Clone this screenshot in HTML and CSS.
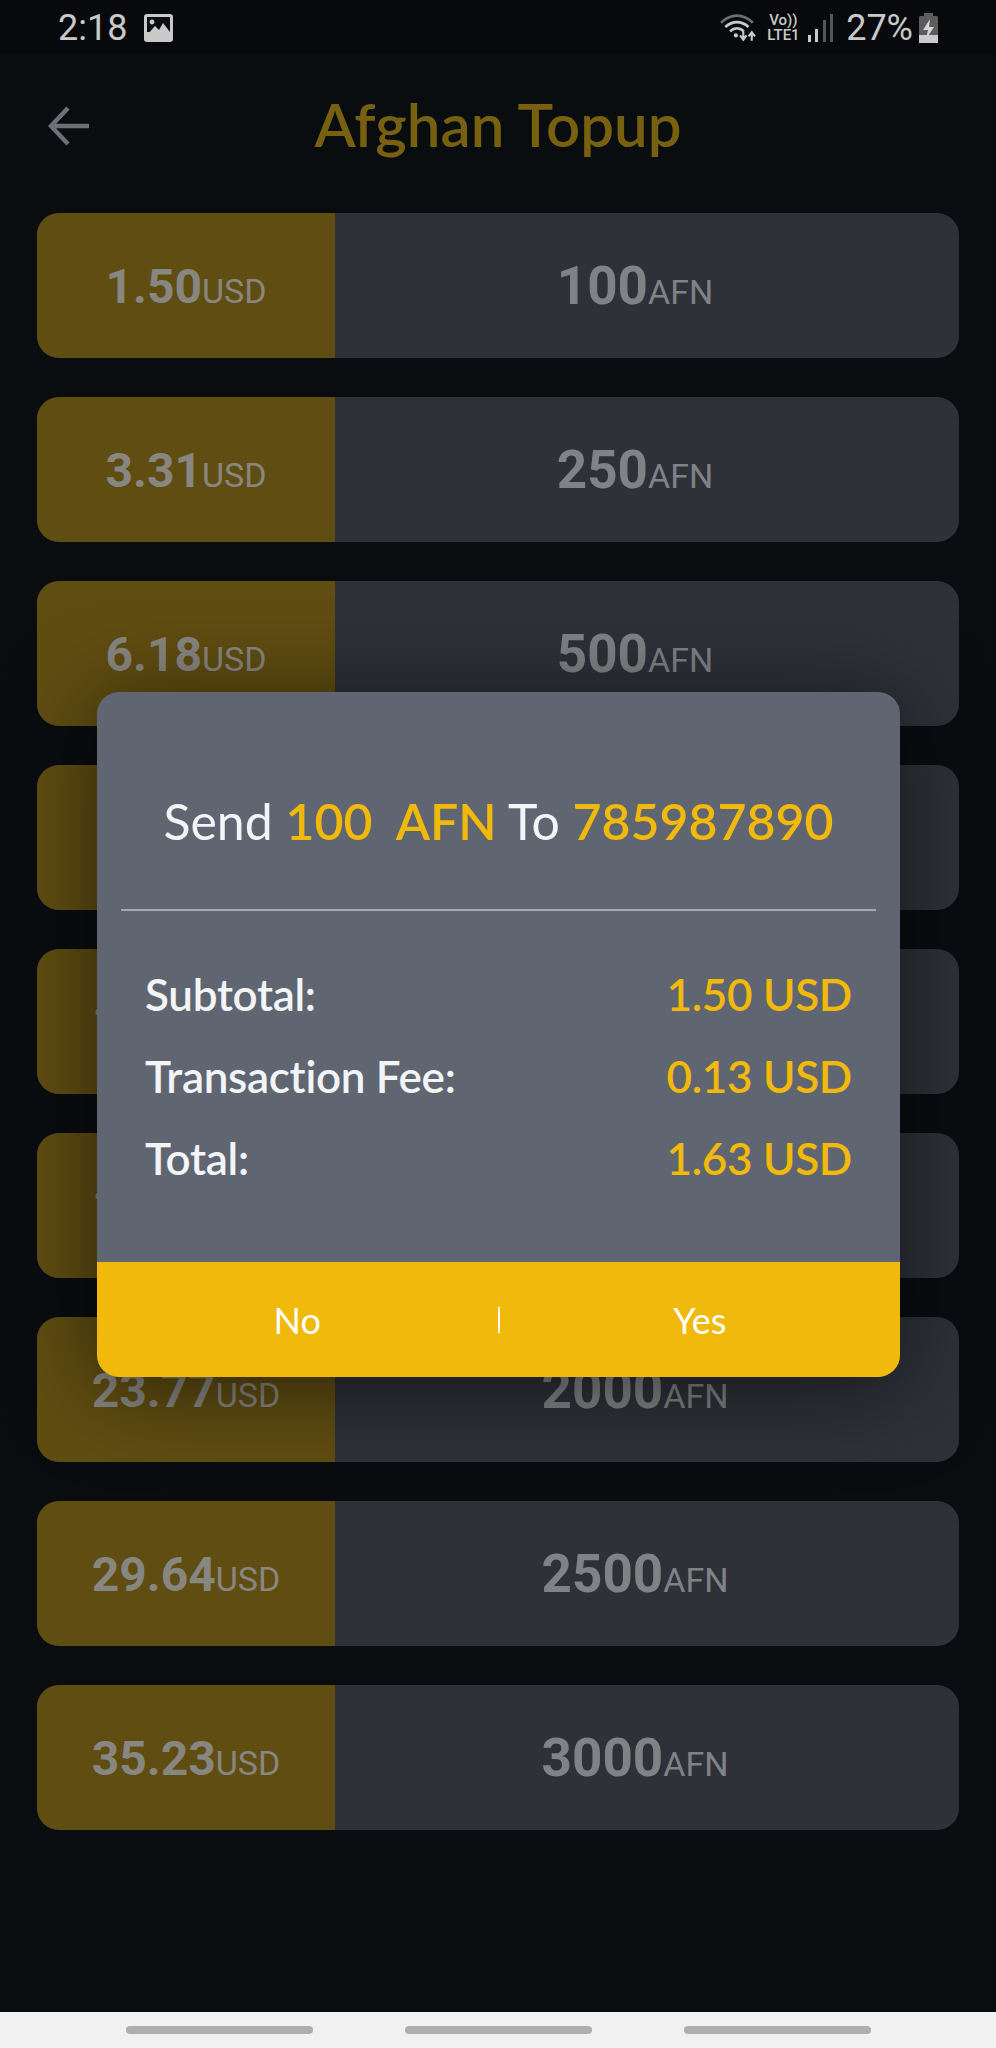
FILE: index.html
```html
<!DOCTYPE html>
<html lang="en">
<head>
    <meta charset="UTF-8">
    <meta name="viewport" content="width=device-width, initial-scale=1.0">
    <title>Afghan Topup</title>
    <link rel="stylesheet" href="styles.css">
</head>
<body>
    <div class="screen">
        <!-- status bar -->
        <div class="status-bar">
            <div class="status-left">
                <span class="clock">2:18</span>
                <svg class="pic-icon" width="29" height="28" viewBox="0 0 29 28">
                    <rect x="0" y="0" width="29" height="28" rx="3" fill="#c9c9c9"/>
                    <rect x="3" y="3" width="23" height="15" fill="#0a0c0f"/>
                    <circle cx="8" cy="8" r="2.4" fill="#c9c9c9"/>
                    <path d="M3 21 L11 12 L15 16 L19 9 L26 18 L26 25 L3 25 Z" fill="#c9c9c9"/>
                </svg>
            </div>
            <div class="status-right">
                <svg class="wifi-icon" width="36" height="30" viewBox="0 0 34 28" fill="none">
                    <path d="M1 9 C10 0 22 0 31 9" stroke="#6d6d6d" stroke-width="2.6"/>
                    <path d="M5 13 C12 7 20 7 27 13" stroke="#c9c9c9" stroke-width="2.6"/>
                    <path d="M9.5 17 C13.5 13.5 18.5 13.5 22.500 17" stroke="#c9c9c9" stroke-width="2.6"/>
                    <circle cx="15" cy="21" r="2" fill="#c9c9c9"/>
                    <path d="M22 17 V24 M19 21 L22 25 L25 21" stroke="#c9c9c9" stroke-width="2"/>
                    <path d="M30 26 V19 M27 22 L30 18 L33 22" stroke="#c9c9c9" stroke-width="2"/>
                </svg>
                <div class="volte"><span>Vo))</span><span>LTE1</span></div>
                <div class="signal">
                    <i class="bar bar-1"></i>
                    <i class="bar bar-2"></i>
                    <i class="bar bar-3"></i>
                    <i class="bar bar-4"></i>
                </div>
                <span class="battery-text">27%</span>
                <svg class="battery-icon" width="19" height="30" viewBox="0 0 19 30">
                    <rect x="5" y="0" width="9" height="3" fill="#5c5c5c"/>
                    <rect x="0" y="3" width="19" height="27" rx="1.500" fill="#5c5c5c"/>
                    <rect x="0" y="22" width="19" height="8" fill="#c9c9c9"/>
                    <path d="M11 6 L4 17 H9 L7 26 L15 14 H10 Z" fill="#d6d6d6"/>
                </svg>
            </div>
        </div>

        <!-- header -->
        <div class="top-bar">
            <svg class="back-icon" width="42" height="40" viewBox="0 0 42 40" fill="none">
                <path d="M41 20 H3 M20 2 L3 20 L20 38" stroke="#6d7074" stroke-width="4.500"/>
            </svg>
            <h1 class="page-title">Afghan Topup</h1>
            <span></span>
        </div>

        <!-- price list -->
        <div class="price-list">
            <div class="price-card">
                <div class="price-usd"><b>1.50</b><span>USD</span></div>
                <div class="price-afn"><b>100</b><span>AFN</span></div>
            </div>
            <div class="price-card">
                <div class="price-usd"><b>3.31</b><span>USD</span></div>
                <div class="price-afn"><b>250</b><span>AFN</span></div>
            </div>
            <div class="price-card">
                <div class="price-usd"><b>6.18</b><span>USD</span></div>
                <div class="price-afn"><b>500</b><span>AFN</span></div>
            </div>
            <div class="price-card">
                <div class="price-usd"><b>8.95</b><span>USD</span></div>
                <div class="price-afn"><b>750</b><span>AFN</span></div>
            </div>
            <div class="price-card">
                <div class="price-usd"><b>11.92</b><span>USD</span></div>
                <div class="price-afn"><b>1000</b><span>AFN</span></div>
            </div>
            <div class="price-card">
                <div class="price-usd"><b>17.85</b><span>USD</span></div>
                <div class="price-afn"><b>1500</b><span>AFN</span></div>
            </div>
            <div class="price-card">
                <div class="price-usd"><b>23.77</b><span>USD</span></div>
                <div class="price-afn"><b>2000</b><span>AFN</span></div>
            </div>
            <div class="price-card">
                <div class="price-usd"><b>29.64</b><span>USD</span></div>
                <div class="price-afn"><b>2500</b><span>AFN</span></div>
            </div>
            <div class="price-card">
                <div class="price-usd"><b>35.23</b><span>USD</span></div>
                <div class="price-afn"><b>3000</b><span>AFN</span></div>
            </div>
        </div>

        <!-- confirm dialog -->
        <div class="dialog">
            <div class="dialog-head">
                <p class="dialog-msg">Send <em>100&nbsp; AFN</em> To <em>785987890</em></p>
            </div>
            <div class="dialog-body">
                <div class="dialog-row"><span>Subtotal:</span><em>1.50 USD</em></div>
                <div class="dialog-row"><span>Transaction Fee:</span><em>0.13 USD</em></div>
                <div class="dialog-row"><span>Total:</span><em>1.63 USD</em></div>
            </div>
            <div class="dialog-foot">
                <span class="dialog-btn">No</span>
                <i class="dialog-sep"></i>
                <span class="dialog-btn">Yes</span>
            </div>
        </div>
    </div>

    <!-- android nav bar -->
    <div class="nav-bar">
        <i class="nav-pill"></i>
        <i class="nav-pill"></i>
        <i class="nav-pill"></i>
    </div>
</body>
</html>
```

FILE: styles.css
```css
html, body {
    margin: 0;
    padding: 0;
}
body {
    width: 996px;
    height: 2048px;
    overflow: hidden;
    display: flex;
    flex-direction: column;
    font-family: "Roboto", "Liberation Sans", sans-serif;
    background-color: #0a0d10;
}
.screen {
    position: relative;
    flex: 1;
}

/* status bar */
.status-bar {
    height: 55px;
    padding: 0 58px;
    display: flex;
    align-items: center;
    justify-content: space-between;
    background-color: #07090c;
    color: #c9c9c9;
}
.status-left {
    display: flex;
    align-items: center;
    gap: 17px;
}
.clock {
    font-size: 36px;
    line-height: 58px;
}
.status-right {
    display: flex;
    align-items: center;
}
.wifi-icon {
    margin-right: 11px;
}
.volte {
    display: flex;
    flex-direction: column;
    align-items: center;
    font-size: 15px;
    font-weight: 500;
    line-height: 15px;
    margin-right: 8px;
}
.signal {
    display: flex;
    align-items: flex-end;
    gap: 4.500px;
    height: 28px;
    margin-right: 13px;
}
.bar {
    width: 3px;
    background-color: #c9c9c9;
}
.bar-1 { height: 7px; }
.bar-2 { height: 13px; }
.bar-3 { height: 22px; background-color: #555; }
.bar-4 { height: 28px; background-color: #555; }
.battery-text {
    font-size: 36px;
    line-height: 58px;
    margin-right: 6px;
}

/* header */
.top-bar {
    height: 140px;
    padding: 0 48px;
    display: grid;
    grid-template-columns: 1fr auto 1fr;
    align-items: center;
}
.back-icon {
    margin-top: 2px;
}
.page-title {
    margin: -3px 0 0;
    font-family: "Lato", "Liberation Sans", sans-serif;
    font-size: 60px;
    font-weight: 600;
    color: #77600f;
}

/* price list */
.price-list {
    padding: 18px 37px 0;
    display: flex;
    flex-direction: column;
    gap: 39px;
}
.price-card {
    height: 145px;
    display: flex;
    border-radius: 22px;
    overflow: hidden;
    background-color: #2e3138;
    color: #818285;
}
.price-usd, .price-afn {
    display: flex;
    align-items: baseline;
    justify-content: center;
    line-height: 147px;
}
.price-usd {
    width: 298px;
    background-color: #604d11;
    color: #888681;
}
.price-afn {
    flex: 1;
    padding-right: 24px;
}
.price-card b {
    font-size: 48px;
    font-weight: 700;
}
.price-card span {
    font-size: 34px;
}
.price-afn b {
    font-size: 53px;
}

/* dialog */
.dialog {
    position: absolute;
    top: 692px;
    left: 97px;
    width: 803px;
    height: 685px;
    display: flex;
    flex-direction: column;
    border-radius: 22px;
    overflow: hidden;
    background-color: #5f6672;
    box-shadow: 0 10px 90px rgba(0, 0, 0, 0.55);
    font-family: "Lato", "Liberation Sans", sans-serif;
    font-variant-ligatures: none;
    color: #f3f4f6;
}
.dialog em {
    font-style: normal;
    color: #f0b90b;
}
.dialog-head {
    height: 219px;
    margin: 0 24px;
    padding-top: 40px;
    box-sizing: border-box;
    display: flex;
    align-items: center;
    justify-content: center;
    border-bottom: 2px solid #a5a9b0;
}
.dialog-msg {
    margin: 0;
    font-size: 50px;
    white-space: nowrap;
}
.dialog-msg em {
    font-weight: 600;
}
.dialog-body {
    flex: 1;
    padding: 42px 48px 0 48px;
}
.dialog-row {
    height: 82px;
    display: flex;
    align-items: center;
    justify-content: space-between;
    font-size: 44px;
    font-weight: 600;
    letter-spacing: -0.3px;
}
.dialog-foot {
    height: 115px;
    display: flex;
    align-items: center;
    background-color: #f0b90b;
    color: #fff;
    font-size: 36px;
}
.dialog-btn {
    flex: 1;
    text-align: center;
}
.dialog-sep {
    width: 2px;
    height: 26px;
    background-color: #fff;
}

/* nav bar */
.nav-bar {
    height: 36px;
    display: flex;
    justify-content: center;
    align-items: center;
    gap: 92px;
    background-color: #f1f1f1;
}
.nav-pill {
    width: 187px;
    height: 8px;
    border-radius: 4px;
    background-color: #aeaeae;
}
```
